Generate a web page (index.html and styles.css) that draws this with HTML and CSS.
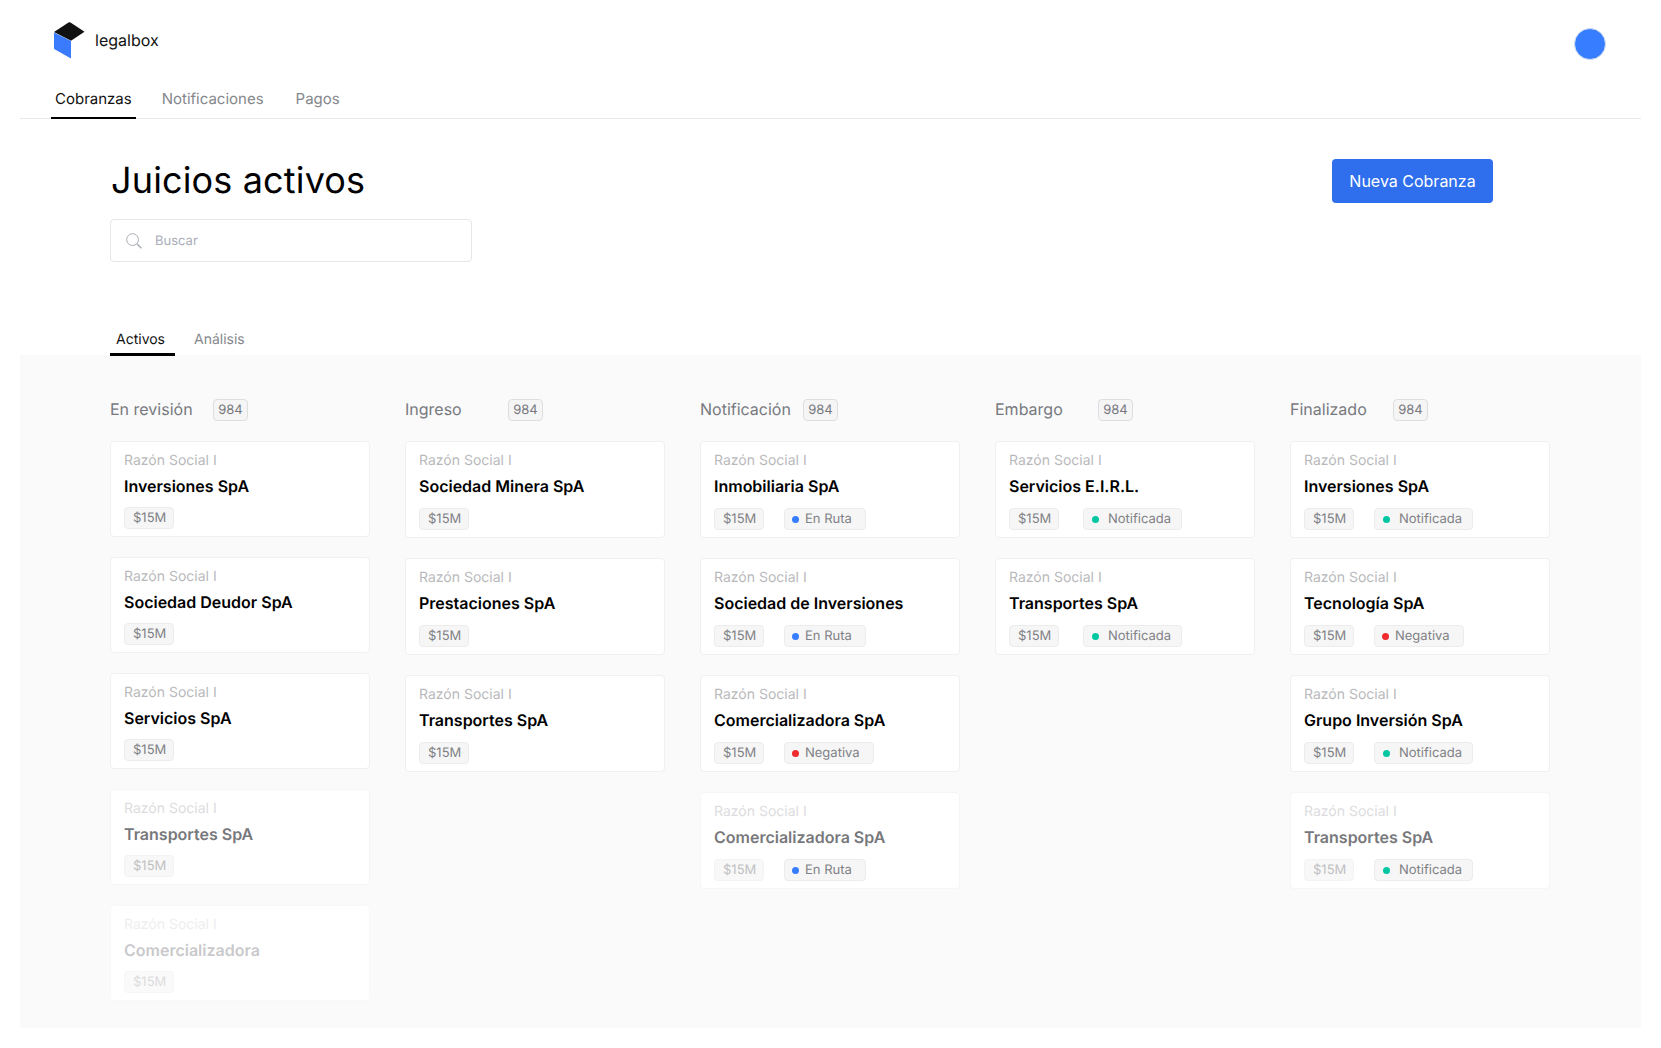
FILE: index.html
```html
<!DOCTYPE html>
<html lang="es">
<head>
<meta charset="utf-8">
<title>legalbox</title>
<link rel="stylesheet" href="styles.css">
</head>
<body>
<header class="topbar">
  <div class="brandrow">
    <div class="brand">
      <svg class="logo" width="31" height="37" viewBox="0 0 31 37" aria-hidden="true">
        <path d="M0 10 L14.5 0.6 Q15.5 0 16.5 0.6 L30.5 9.8 L17 18.8 Z" fill="#111"/>
        <path d="M0 10.4 L17 19 L17 36.5 L1 27.6 Q0 27 0 26 Z" fill="#3a7bfd"/>
      </svg>
      <span class="brandname">legalbox</span>
    </div>
    <div class="avatar"></div>
  </div>
  <nav class="mainnav">
    <a class="mainnav-item is-active">Cobranzas</a>
    <a class="mainnav-item">Notificaciones</a>
    <a class="mainnav-item">Pagos</a>
  </nav>
</header>

<section class="pagehead">
  <div class="titlerow">
    <h1 class="title">Juicios activos</h1>
    <button class="primary">Nueva Cobranza</button>
  </div>
  <div class="search">
    <svg width="16" height="16" viewBox="0 0 16 16" fill="none" aria-hidden="true">
      <circle cx="6.6" cy="6.6" r="5.9" stroke="#a9adb5" stroke-width="1"/>
      <path d="M11 11 L15.3 15.3" stroke="#a9adb5" stroke-width="1.5"/>
    </svg>
    <span class="placeholder">Buscar</span>
  </div>
  <div class="subtabs">
    <a class="subtab is-active">Activos</a>
    <a class="subtab">Análisis</a>
  </div>
</section>

<main class="board">
  <section class="col col--tight">
    <div class="colhead"><span class="coltitle">En revisión</span><span class="count">984</span></div>
    <article class="card"><div class="label">Razón Social I</div><div class="name">Inversiones SpA</div><div class="tags"><span class="tag amount">$15M</span></div></article>
    <article class="card"><div class="label">Razón Social I</div><div class="name">Sociedad Deudor SpA</div><div class="tags"><span class="tag amount">$15M</span></div></article>
    <article class="card"><div class="label">Razón Social I</div><div class="name">Servicios SpA</div><div class="tags"><span class="tag amount">$15M</span></div></article>
    <article class="card card--fade"><div class="label">Razón Social I</div><div class="name">Transportes SpA</div><div class="tags"><span class="tag amount">$15M</span></div></article>
    <article class="card card--fader"><div class="label">Razón Social I</div><div class="name">Comercializadora</div><div class="tags"><span class="tag amount">$15M</span></div></article>
  </section>
  <section class="col">
    <div class="colhead"><span class="coltitle">Ingreso</span><span class="count">984</span></div>
    <article class="card"><div class="label">Razón Social I</div><div class="name">Sociedad Minera SpA</div><div class="tags"><span class="tag amount">$15M</span></div></article>
    <article class="card"><div class="label">Razón Social I</div><div class="name">Prestaciones SpA</div><div class="tags"><span class="tag amount">$15M</span></div></article>
    <article class="card"><div class="label">Razón Social I</div><div class="name">Transportes SpA</div><div class="tags"><span class="tag amount">$15M</span></div></article>
  </section>
  <section class="col">
    <div class="colhead"><span class="coltitle">Notificación</span><span class="count">984</span></div>
    <article class="card"><div class="label">Razón Social I</div><div class="name">Inmobiliaria SpA</div><div class="tags"><span class="tag amount">$15M</span><span class="tag status"><i class="dot dot--blue"></i>En Ruta</span></div></article>
    <article class="card"><div class="label">Razón Social I</div><div class="name">Sociedad de Inversiones</div><div class="tags"><span class="tag amount">$15M</span><span class="tag status"><i class="dot dot--blue"></i>En Ruta</span></div></article>
    <article class="card"><div class="label">Razón Social I</div><div class="name">Comercializadora SpA</div><div class="tags"><span class="tag amount">$15M</span><span class="tag status"><i class="dot dot--red"></i>Negativa</span></div></article>
    <article class="card card--fade"><div class="label">Razón Social I</div><div class="name">Comercializadora SpA</div><div class="tags"><span class="tag amount">$15M</span><span class="tag status"><i class="dot dot--blue"></i>En Ruta</span></div></article>
  </section>
  <section class="col col--wide-tags">
    <div class="colhead"><span class="coltitle">Embargo</span><span class="count">984</span></div>
    <article class="card"><div class="label">Razón Social I</div><div class="name">Servicios E.I.R.L.</div><div class="tags"><span class="tag amount">$15M</span><span class="tag status status--wide"><i class="dot dot--green"></i>Notificada</span></div></article>
    <article class="card"><div class="label">Razón Social I</div><div class="name">Transportes SpA</div><div class="tags"><span class="tag amount">$15M</span><span class="tag status status--wide"><i class="dot dot--green"></i>Notificada</span></div></article>
  </section>
  <section class="col">
    <div class="colhead"><span class="coltitle">Finalizado</span><span class="count">984</span></div>
    <article class="card"><div class="label">Razón Social I</div><div class="name">Inversiones SpA</div><div class="tags"><span class="tag amount">$15M</span><span class="tag status status--wide"><i class="dot dot--green"></i>Notificada</span></div></article>
    <article class="card"><div class="label">Razón Social I</div><div class="name">Tecnología SpA</div><div class="tags"><span class="tag amount">$15M</span><span class="tag status"><i class="dot dot--red"></i>Negativa</span></div></article>
    <article class="card"><div class="label">Razón Social I</div><div class="name">Grupo Inversión SpA</div><div class="tags"><span class="tag amount">$15M</span><span class="tag status status--wide"><i class="dot dot--green"></i>Notificada</span></div></article>
    <article class="card card--fade"><div class="label">Razón Social I</div><div class="name">Transportes SpA</div><div class="tags"><span class="tag amount">$15M</span><span class="tag status status--wide"><i class="dot dot--green"></i>Notificada</span></div></article>
  </section>
</main>
</body>
</html>
```
FILE: styles.css
```css
* { box-sizing: border-box; }
html, body { margin: 0; padding: 0; background: #fff; }
body {
  font-family: Inter, "Liberation Sans", sans-serif;
  text-rendering: geometricPrecision;
  color: #000;
  height: 1048px;
  overflow: hidden;
}

.topbar {
  margin: 0 20px;
  height: 119px;
  border-bottom: 1px solid #e8e8e8;
}
.brandrow {
  height: 85px;
  padding: 22px 35px 0 34px;
  display: flex;
  justify-content: space-between;
  align-items: flex-start;
}
.brand { display: flex; align-items: flex-start; gap: 10px; }
.logo { display: block; }
.brandname { font-size: 16px; line-height: 20px; margin-top: 8px; color: #111; }
.avatar {
  width: 32px;
  height: 32px;
  margin-top: 6px;
  border-radius: 50%;
  background: #377dff;
  border: 1px solid #d5dff0;
}
.mainnav { display: flex; height: 34px; margin-left: 31px; }
.mainnav-item {
  padding: 4px 4px 0;
  margin-right: 22px;
  font-size: 15px;
  line-height: 20px;
  color: #85878c;
  height: 34px;
}
.mainnav-item:nth-child(2) { margin-right: 24px; }
.mainnav-item.is-active { color: #111; border-bottom: 2px solid #000; }

.pagehead { padding: 0 168px 0 110px; }
.titlerow {
  height: 100px;
  padding-top: 39px;
  display: flex;
  justify-content: space-between;
  align-items: flex-start;
}
.title {
  margin: 0 0 0 1px;
  font-size: 36px;
  line-height: 44px;
  font-weight: 400;
  letter-spacing: 0.15px;
}
.primary {
  width: 161px;
  height: 44px;
  margin-top: 1px;
  border: 0;
  border-radius: 4px;
  background: #2f6fed;
  color: #fff;
  font: 400 16px/20px Inter, "Liberation Sans", sans-serif;
}
.search {
  width: 362px;
  height: 43px;
  border: 1px solid #e6e6e8;
  border-radius: 4px;
  display: flex;
  align-items: center;
  padding-left: 15px;
  gap: 13px;
}
.placeholder { font-size: 13px; color: #a9adb8; }
.subtabs { position: relative; display: flex; margin-top: 61px; margin-bottom: -1px; height: 33px; }
.subtab {
  padding: 8px 6px 0;
  font-size: 14px;
  line-height: 18px;
  color: #85878c;
  height: 33px;
}
.subtab + .subtab { margin-left: 13px; }
.subtab.is-active { color: #111; width: 65px; border-bottom: 3px solid #000; }

.board {
  margin: 0 20px;
  height: 673px;
  background: #fafafa;
  padding: 44px 90px 0;
  display: grid;
  grid-template-columns: repeat(5, 260px);
  column-gap: 35px;
  align-items: start;
}
.col { display: flex; flex-direction: column; gap: 20px; }
.colhead { display: flex; align-items: center; height: 22px; }
.coltitle { width: 103px; margin-top: -2px; font-size: 16px; line-height: 20px; color: #77797e; }
.count {
  width: 35px;
  height: 22px;
  border: 1px solid #dedede;
  border-radius: 4px;
  background: #f5f5f5;
  color: #77797e;
  font-size: 13px;
  line-height: 20px;
  text-align: center;
}
.card {
  height: 97px;
  padding: 10px 13px 0;
  background: #fff;
  border: 1px solid #f0f0f0;
  border-radius: 4px;
}
.col--tight .card { height: 96px; }
.label { font-size: 14px; line-height: 18px; color: #b9b9bc; }
.name { font-size: 16px; line-height: 20px; font-weight: 600; color: #000; margin-top: 6px; }
.tags { display: flex; gap: 20px; margin-top: 12px; }
.col--tight .tags { margin-top: 11px; }
.col--wide-tags .tags { gap: 24px; }
.tag {
  height: 22px;
  border: 1px solid #ececec;
  border-radius: 4px;
  background: #f6f6f6;
  color: #808185;
  font-size: 13px;
  line-height: 20px;
}
.amount { width: 50px; padding: 0 0 0 8px; }
.status { display: flex; align-items: center; gap: 6px; padding: 0 13px 0 7px; }
.status--wide { gap: 9px; padding: 0 10px 0 8px; }
.dot { width: 7px; height: 7px; border-radius: 50%; display: block; }
.dot--blue { background: #377dff; }
.dot--red { background: #ef2b2d; }
.dot--green { background: #00c6a2; }

.card--fade { border-color: #f5f5f5; }
.card--fade .label { color: #dcdcde; }
.card--fade .name { color: #77787b; }
.card--fade .amount { color: #c0c0c2; background: #f8f8f8; border-color: #f3f3f3; }
.card--fader { border-color: #f8f8f8; }
.card--fader .label { color: #eeeeef; }
.card--fader .name { color: #c9c9cb; }
.card--fader .amount { color: #dcdcde; background: #fafafa; border-color: #f6f6f6; }
```
